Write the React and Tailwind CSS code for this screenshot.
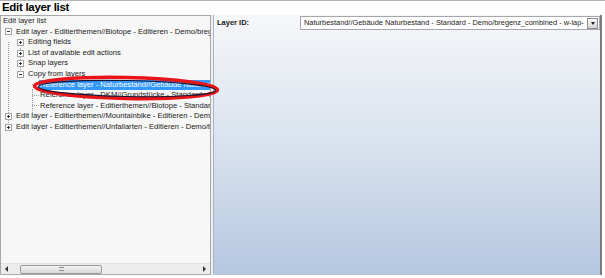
import React from 'react'

const ui = { fontFamily: '"Liberation Sans", Arial, sans-serif' }

// one tree row, 10.6px high
function Row({ indent, box, children, selected, lines }) {
  return (
    <div className="relative flex h-[10.6px] items-center whitespace-nowrap">
      {lines}
      {box && (
        <span
          className="absolute top-[1.8px] flex h-[7px] w-[7px] items-center justify-center border border-[#a5a5a5] bg-white text-[7px] leading-none text-[#333]"
          style={{ left: box }}
        >
          <span className="relative block h-[1px] w-[3px] bg-[#444]" />
          {box && children && null}
        </span>
      )}
      <span
        className={`absolute leading-[10.6px] ${selected ? 'bg-[#3399ff] pl-[1px] pr-[40px] text-white' : 'text-[#1a1a1a]'}`}
        style={{ left: indent }}
      >
        {children}
      </span>
    </div>
  )
}

function Box({ x, plus }) {
  return (
    <span
      className="absolute top-[1.8px] h-[7px] w-[7px] border border-[#a5a5a5] bg-white"
      style={{ left: x }}
    >
      <span className="absolute left-[1px] top-[2px] h-[1px] w-[3px] bg-[#333]" />
      {plus && <span className="absolute left-[2px] top-[1px] h-[3px] w-[1px] bg-[#333]" />}
    </span>
  )
}

function Item({ x, text, box, plus, selected }) {
  return (
    <div className="relative h-[10.6px] whitespace-nowrap">
      {box != null && <Box x={box} plus={plus} />}
      <span
        className={`absolute top-0 leading-[10.6px] ${selected ? 'bg-[#3399ff] pl-[1px] pr-[60px] text-white' : 'text-[#1a1a1a]'}`}
        style={{ left: x }}
      >
        {text}
      </span>
    </div>
  )
}

export default function App() {
  return (
    <div className="relative h-[278px] w-[605px] overflow-hidden border-t border-[#b4b4b4] bg-white" style={ui}>
      <div className="h-[14px] pl-[2px] text-[11.5px] font-bold leading-[13px] tracking-[-0.3px] text-black">
        Edit layer list
      </div>
      <div className="flex h-[260px]">
        {/* tree */}
        <div className="relative flex w-[211px] flex-col border border-[#a8a8a8] bg-[#f7f7f7] text-[7.6px]">
          <div className="relative flex-1 overflow-hidden">
            {/* dotted tree lines */}
            <div className="absolute left-[7px] top-[26px] h-[85px] border-l border-dotted border-[#a0a0a0]" />
            <div className="absolute left-[19px] top-[32px] h-[28px] border-l border-dotted border-[#a0a0a0]" />
            <div className="absolute left-[31px] top-[73px] h-[26px] border-l border-dotted border-[#a0a0a0]" />
            <div className="absolute left-[31px] top-[68px] w-[7px] border-t border-dotted border-[#a0a0a0]" />
            <div className="absolute left-[31px] top-[79px] w-[7px] border-t border-dotted border-[#a0a0a0]" />
            <div className="absolute left-[31px] top-[89px] w-[7px] border-t border-dotted border-[#a0a0a0]" />
            <Item x={2} text="Edit layer list" />
            <Item x={15} box={4} text="Edit layer - Editierthemen//Biotope - Editieren - Demo/bregenz_combined" />
            <Item x={27} box={16} plus text="Editing fields" />
            <Item x={27} box={16} plus text="List of available edit actions" />
            <Item x={27} box={16} plus text="Snap layers" />
            <Item x={27} box={16} text="Copy from layers" />
            <Item x={38} selected text="Reference layer - Naturbestand//Gebäude Naturbestand - Standard" />
            <Item x={39} text="Reference layer - DKM//Grundstücke - Standard - Demo" />
            <Item x={39} text="Reference layer - Editierthemen//Biotope - Standard - Demo" />
            <Item x={15} box={4} plus text="Edit layer - Editierthemen//Mountainbike - Editieren - Demo/bregenz" />
            <Item x={15} box={4} plus text="Edit layer - Editierthemen//Unfallarten - Editieren - Demo/bregenz" />
          </div>
          {/* horizontal scrollbar */}
          <div className="relative flex h-[11px] items-center border-t border-[#e2e2e2] bg-[#ececec]">
            <span className="ml-[4px] h-0 w-0 border-y-[3px] border-r-[3px] border-y-transparent border-r-[#333]" />
            <div className="ml-[12px] flex h-[9px] w-[82px] items-center justify-center rounded-[2px] border border-[#9a9a9a] bg-gradient-to-b from-[#f4f4f4] to-[#d8d8d8]">
              <span className="h-[4px] w-[5px] border-y border-[#8a8a8a]" />
            </div>
            <span className="ml-auto mr-[4px] h-0 w-0 border-y-[3px] border-l-[3px] border-y-transparent border-l-[#333]" />
          </div>
        </div>
        <div className="w-[2px] bg-[#eef0f3]" />
        {/* detail panel */}
        <div className="flex w-[389px] flex-col border-l border-[#a9b4c3] border-r-2 border-r-[#7a7a7a] bg-gradient-to-b from-[#f6f7f9] via-[#d9e2ee] to-[#b5c7e1] pl-[3px] pt-[1px]">
          <div className="flex items-center">
            <span className="w-[83px] text-[7.5px] font-bold text-[#1a1a1a]">Layer ID:</span>
            <div className="flex h-[14px] w-[300px] items-center border border-[#a4a8ae] bg-white pl-[3px]">
              <span className="flex-1 overflow-hidden whitespace-nowrap text-[7.4px] text-[#1a1a1a]">
                Naturbestand//Gebäude Naturbestand - Standard - Demo/bregenz_combined - w-lap-
              </span>
              <span className="mr-[1px] flex h-[11px] w-[11px] items-center justify-center border border-[#8c8c8c] bg-gradient-to-b from-[#fafafa] to-[#d5d5d5]">
                <span className="h-0 w-0 border-x-[2.5px] border-t-[3px] border-x-transparent border-t-[#222]" />
              </span>
            </div>
          </div>
        </div>
      </div>
      {/* red marker ellipse */}
      <svg className="absolute left-0 top-0" width="605" height="278">
        <ellipse cx="126" cy="87" rx="91.5" ry="10.5" fill="none" stroke="#e8141a" strokeWidth="3.5" transform="rotate(1.2 126 87)" />
        <ellipse cx="127" cy="87.5" rx="88.5" ry="8" fill="none" stroke="#1a1530" strokeWidth="1.2" transform="rotate(1.2 126 87)" />
      </svg>
    </div>
  )
}
